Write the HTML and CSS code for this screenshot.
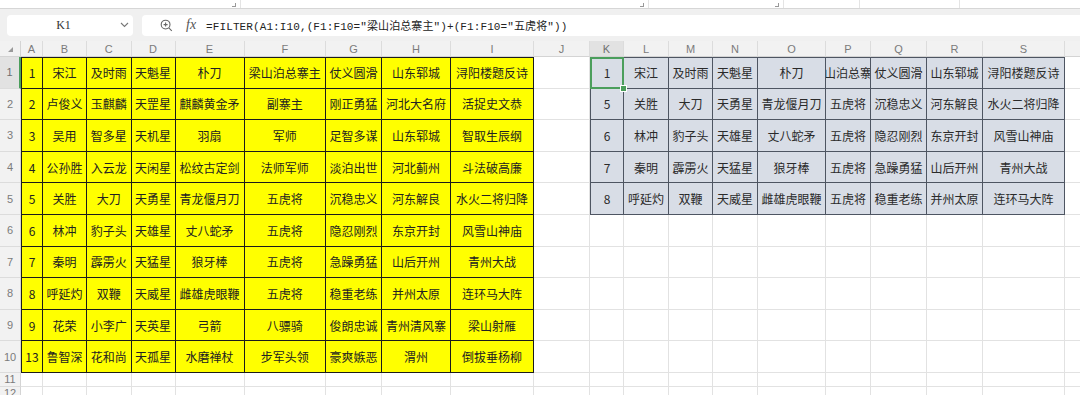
FILE: index.html
```html
<!DOCTYPE html>
<html>

<head>
	<title>
		FILTER
	</title>

	<link rel="stylesheet" href="styles.css">

</head>

<body>
	<div class="ribbon">
		<div class="grp g1"><span class="launch"></span></div>
		<div class="grp g2"><span class="launch"></span></div>
		<div class="grp g3"><span class="launch"></span></div>
		<div class="grp g4"></div>
		<div class="grp g5"></div>
		<div class="grp g6"></div>
	</div>

	<div class="fbar">
		<div class="namebox">
			<span class="ref">K1</span>
			<svg class="chev" width="9" height="6" viewBox="0 0 9 6"><path d="M1 1l3.5 3.5L8 1" fill="none" stroke="#777" stroke-width="1.1"/></svg>
		</div>
		<div class="fbox">
			<svg class="zoomicon" width="13" height="13" viewBox="0 0 13 13">
				<circle cx="5.6" cy="5.6" r="4.4" fill="none" stroke="#666" stroke-width="1.1"/>
				<path d="M3.6 5.6h4M5.6 3.6v4M8.8 8.8l3 3" fill="none" stroke="#666" stroke-width="1.1"/>
			</svg>
			<span class="fx">fx</span>
			<span class="formula">=FILTER(A1:I10,(F1:F10="梁山泊总寨主")+(F1:F10="五虎将"))</span>
		</div>
	</div>

	<div id="sheet" class="sheet"></div>

	<script type="text/javascript">

		// T is the last column, its letter is off screen
		var cols = "ABCDEFGHIJKLMNOPQRS ".split("");

		var heroes = [
			["1", "宋江", "及时雨", "天魁星", "朴刀", "梁山泊总寨主", "仗义圆滑", "山东郓城", "浔阳楼题反诗"],
			["2", "卢俊义", "玉麒麟", "天罡星", "麒麟黄金矛", "副寨主", "刚正勇猛", "河北大名府", "活捉史文恭"],
			["3", "吴用", "智多星", "天机星", "羽扇", "军师", "足智多谋", "山东郓城", "智取生辰纲"],
			["4", "公孙胜", "入云龙", "天闲星", "松纹古定剑", "法师军师", "淡泊出世", "河北蓟州", "斗法破高廉"],
			["5", "关胜", "大刀", "天勇星", "青龙偃月刀", "五虎将", "沉稳忠义", "河东解良", "水火二将归降"],
			["6", "林冲", "豹子头", "天雄星", "丈八蛇矛", "五虎将", "隐忍刚烈", "东京开封", "风雪山神庙"],
			["7", "秦明", "霹雳火", "天猛星", "狼牙棒", "五虎将", "急躁勇猛", "山后开州", "青州大战"],
			["8", "呼延灼", "双鞭", "天威星", "雌雄虎眼鞭", "五虎将", "稳重老练", "并州太原", "连环马大阵"],
			["9", "花荣", "小李广", "天英星", "弓箭", "八骠骑", "俊朗忠诚", "青州清风寨", "梁山射雁"],
			["13", "鲁智深", "花和尚", "天孤星", "水磨禅杖", "步军头领", "豪爽嫉恶", "渭州", "倒拔垂杨柳"]
		]

		// what FILTER spills into K1
		var result = heroes.filter(function (r) {
			return r[5] == "梁山泊总寨主" || r[5] == "五虎将";
		})

		function cell(cls, text) {
			return "<div class='" + cls + "'><span>" + text + "</span></div>";
		}

		function drawSheet() {
			var content = "<div class='corner'><span class='tri'></span></div>";
			for (var c = 0; c < cols.length; c++) {
				content += cell(cols[c] == "K" ? "colhead on" : "colhead", cols[c]);
			}
			for (var r = 0; r < 12; r++) {
				content += cell(r == 0 ? "rowhead on" : "rowhead", r + 1);
				for (var c = 0; c < cols.length; c++) {
					var cls = "c";
					var text = "";
					if (r < 10 && c < 9) {
						cls += " y";
						if (r == 0) cls += " top";
						if (c == 0) cls += " left";
						text = heroes[r][c];
					}
					if (r < result.length && c >= 10 && c < 19) {
						cls += " b";
						if (r == 0) cls += " top";
						if (c == 10) cls += " left";
						if (r == 0 && c == 10) cls += " sel";
						text = result[r][c - 10];
					}
					content += cell(cls, text);
				}
			}
			document.getElementById("sheet").innerHTML = content;
		}

		drawSheet();

	</script>
</body>

</html>
```

FILE: styles.css
```css
body {
	margin: 0;
	width: 1080px;
	height: 395px;
	overflow: hidden;
	background: #fff;
	font-family: "Noto Sans CJK SC", sans-serif;
}

.ribbon {
	display: flex;
	height: 8px;
	border-bottom: 1px solid #d6d6d6;
	background: #fff;
}

.grp {
	position: relative;
	border-right: 1px solid #e4e4e4;
	box-sizing: border-box;
	height: 8px;
}

.g1 {
	width: 241px;
}

.g2 {
	width: 408px;
}

.g3 {
	width: 135px;
}

.g4 {
	width: 76px;
}

.g5 {
	width: 100px;
}

.g6 {
	flex: 1;
	border-right: none;
}

.launch {
	position: absolute;
	right: 4px;
	bottom: 1px;
	width: 3px;
	height: 3px;
	border-right: 1px solid #999;
	border-bottom: 1px solid #999;
}

.fbar {
	display: flex;
	align-items: center;
	gap: 9px;
	height: 32px;
	padding-left: 7px;
	background: #f0f0f0;
}

.namebox {
	display: flex;
	align-items: center;
	width: 126px;
	height: 21px;
	background: #fff;
	border-radius: 4px;
}

.ref {
	flex: 1;
	text-align: center;
	font-family: "Liberation Serif", serif;
	font-size: 12px;
	color: #333;
}

.chev {
	margin-right: 4px;
}

.fbox {
	display: flex;
	align-items: center;
	flex: 1;
	height: 21px;
	background: #fff;
	border-radius: 4px 0 0 4px;
	padding-left: 18px;
}

.fx {
	margin-left: 13px;
	font-family: "Liberation Serif", serif;
	font-style: italic;
	font-size: 14px;
	color: #555;
}

.formula {
	margin-left: 10px;
	font-family: "Liberation Mono", "Noto Sans CJK SC", monospace;
	font-size: 11px;
	letter-spacing: 0.1px;
	color: #222;
	white-space: nowrap;
}

.sheet {
	display: grid;
	grid-template-columns: 21px 22px 44px 44.5px 44px 69px 81.5px 56px 69px 83px 56px 34px 45px 44px 45px 68px 45px 56px 56px 82px 40px;
	grid-template-rows: 16px repeat(10, 31.6px) 14px 14px;
}

.sheet > div {
	display: flex;
	align-items: center;
	justify-content: center;
	box-sizing: border-box;
	overflow: hidden;
	white-space: nowrap;
}

.corner,
.colhead,
.rowhead {
	background: #f2f2f2;
	color: #7b7b7b;
	font-family: "Liberation Sans", sans-serif;
	font-size: 11px;
}

.corner {
	position: relative;
	border-right: 1px solid #d4d4d4;
	border-bottom: 1px solid #d4d4d4;
}

.tri {
	position: absolute;
	left: 8px;
	top: 6px;
	width: 0;
	height: 0;
	border-left: 5px solid transparent;
	border-bottom: 5px solid #9a9a9a;
}

.colhead {
	border-right: 1px solid #dcdcdc;
	border-bottom: 1px solid #d4d4d4;
}

.rowhead {
	border-right: 1px solid #d4d4d4;
	border-bottom: 1px solid #dcdcdc;
}

.colhead.on {
	background: #e2e2e2;
	color: #6f6f6f;
}

.rowhead.on {
	background: #e2e2e2;
	border-right: 2px solid #4b9e5c;
	color: #6f6f6f;
}

.c {
	border-right: 1px solid #e2e2e2;
	border-bottom: 1px solid #e2e2e2;
	font-size: 12px;
	color: #222;
}

.y {
	background: #ffff00;
	border-right-color: #1c1c1c;
	border-bottom-color: #1c1c1c;
}

.y.top {
	border-top: 1px solid #1c1c1c;
}

.y.left {
	border-left: 1px solid #1c1c1c;
}

.b {
	background: #d8dde6;
	border-right-color: #4e5562;
	border-bottom-color: #4e5562;
	color: #2a2a2a;
}

.b.top {
	border-top: 1px solid #4e5562;
}

.b.left {
	border-left: 1px solid #4e5562;
}

.sheet > .sel {
	position: relative;
	overflow: visible;
}

.sel::after {
	content: "";
	position: absolute;
	left: -1px;
	top: -1px;
	right: -1px;
	bottom: -1px;
	border: 2px solid #4b9e5c;
}

.sel::before {
	content: "";
	position: absolute;
	right: -4px;
	bottom: -4px;
	width: 5px;
	height: 5px;
	background: #4b9e5c;
	border: 1px solid #fff;
	z-index: 1;
}
```
